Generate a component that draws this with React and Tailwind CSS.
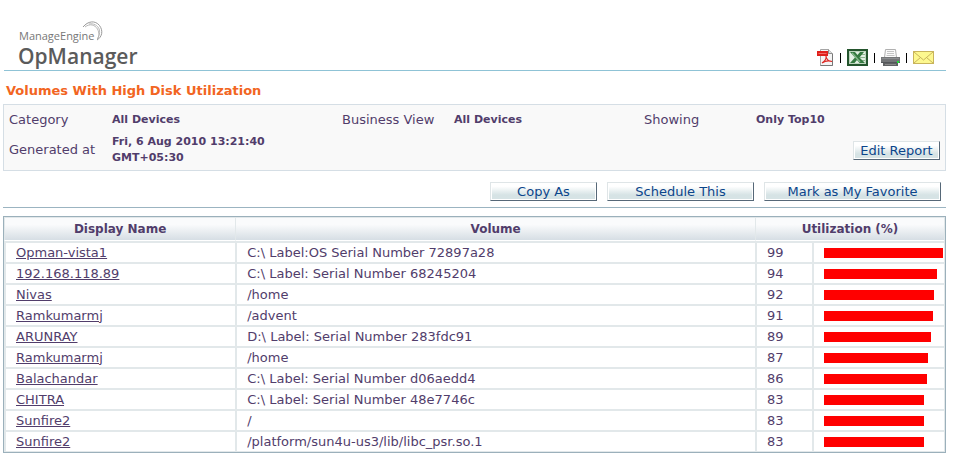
import React from 'react';

const volumes = [
  { id: 1, name: 'Opman-vista1', volume: 'C:\\ Label:OS Serial Number 72897a28', used: 99 },
  { id: 2, name: '192.168.118.89', volume: 'C:\\ Label: Serial Number 68245204', used: 94 },
  { id: 3, name: 'Nivas', volume: '/home', used: 92 },
  { id: 4, name: 'Ramkumarmj', volume: '/advent', used: 91 },
  { id: 5, name: 'ARUNRAY', volume: 'D:\\ Label: Serial Number 283fdc91', used: 89 },
  { id: 6, name: 'Ramkumarmj', volume: '/home', used: 87 },
  { id: 7, name: 'Balachandar', volume: 'C:\\ Label: Serial Number d06aedd4', used: 86 },
  { id: 8, name: 'CHITRA', volume: 'C:\\ Label: Serial Number 48e7746c', used: 83 },
  { id: 9, name: 'Sunfire2', volume: '/', used: 83 },
  { id: 10, name: 'Sunfire2', volume: '/platform/sun4u-us3/lib/libc_psr.so.1', used: 83 },
];

const PdfIcon = () => (
  <svg width="17" height="17" viewBox="0 0 17 17">
    <path d="M3.5.5h8l4 4v12h-12z" fill="#f4f4f4" stroke="#a5a5a5" />
    <path d="M11.500.5v4h4" fill="#ddd" stroke="#8f8f8f" />
    <path d="M15.500 5v11.500h-12" fill="none" stroke="#777" />
    <rect x="0" y="2" width="11" height="5" fill="#e0201b" />
    <path d="M1.500 4.500h8" stroke="#f06a66" />
    <path d="M5 14c3-2 4.500-5 4-7 0 3 2.500 5.500 6 5.500-3-1-7-.5-10 1.500z" fill="none" stroke="#dd2a25" strokeWidth="1.200" />
  </svg>
);

const ExcelIcon = () => (
  <svg width="21" height="17" viewBox="0 0 21 17">
    <rect x="1" y="1" width="19" height="15" fill="#e3efe3" stroke="#24552d" strokeWidth="2" />
    <rect x="2.500" y="2.500" width="16" height="12" fill="none" stroke="#bcd4bc" />
    <path d="M13 5.500h5M13 8.500h5M12 11.500h6" stroke="#8db58f" />
    <path d="M3 3h5l2.500 3L13 3h4l-4.500 5.500L18 14h-5.500L10 11l-2.500 3H3l5-5.500z" fill="#357a40" />
    <path d="M5 4l8 9" stroke="#86b98b" strokeWidth="1.500" />
  </svg>
);

const PrinterIcon = () => (
  <svg width="19" height="17" viewBox="0 0 19 17">
    <path d="M4.500.5h10l1 8h-12z" fill="#fafafa" stroke="#b0b0b0" />
    <path d="M6 2.500h7M6 4.500h7M5.500 6.500h8" stroke="#c4c4c4" />
    <rect x="0" y="8" width="19" height="6" fill="#747678" />
    <path d="M1 9.500h17" stroke="#8b8d8f" />
    <path d="M0 13.500h19" stroke="#55575a" />
    <rect x="2" y="14" width="15" height="3" fill="#606264" />
    <path d="M4 15.500h11" stroke="#8a8a8a" />
    <rect x="16" y="12" width="2" height="2" fill="#1fe03a" />
  </svg>
);

const MailIcon = () => (
  <svg width="21" height="13" viewBox="0 0 21 13">
    <rect x=".5" y=".5" width="20" height="12" fill="#fdf88f" stroke="#c9b45c" />
    <path d="M1 1l9.500 8L20 1M1 12l6.500-5.500M20 12l-6.500-5.500" fill="none" stroke="#c9b45c" />
  </svg>
);

const actions = [
  { label: 'Export as PDF', Icon: PdfIcon },
  { label: 'Export as Excel', Icon: ExcelIcon },
  { label: 'Print', Icon: PrinterIcon },
  { label: 'Send by mail', Icon: MailIcon },
];

const ReportButton = ({ className, children }) => (
  <button
    type="button"
    className={`h-[19px] border border-t-[#dfe5e7] border-l-[#dfe5e7] border-r-[#566878] border-b-[#566878] bg-linear-to-b from-white from-20% to-[#d6e3e5] to-70% text-[13px] leading-[17px] text-[#0b458b] shadow-[inset_0_0_0_1px_#fff] ${className}`}
  >
    {children}
  </button>
);

const Logo = () => (
  <div className="relative pl-[14px] text-[#5b5b5b] font-['Open_Sans',sans-serif]">
    <div className="pl-px text-[11px] leading-[12px] text-[#777]">ManageEngine</div>
    <div className="text-[21px] leading-[28px] font-semibold">OpManager</div>
    <svg className="absolute left-[76px] -top-[9px]" width="26" height="22" viewBox="0 0 26 22" fill="none">
      <path d="M3 6C8 0 15-1 19.500 4.500 23.500 10 22 16 17 19" stroke="#999" />
      <path d="M5 6c5-4 10-2 12.500 2 2 4 1.500 7 0 10" stroke="#a5a5a5" strokeWidth=".8" />
      <path d="M9 3c4-1 9 1 10.500 6 .5 4-.5 6-2 9" stroke="#aaa" strokeWidth=".8" />
    </svg>
  </div>
);

const App = () => {
  return (
    <div className="pl-[3px] pr-[7px] pb-[2px] text-[13px] leading-[16px] text-[#513d6b] font-['DejaVu_Sans',Verdana,sans-serif]">
      <header className="ml-px flex items-end justify-between border-b border-[#8fc3d6] pt-[30px]">
        <Logo />
        <div className="flex items-center gap-[6px] pr-[12px] pb-[4px]">
          {actions.map(({ label, Icon }, index) => (
            <React.Fragment key={label}>
              {index > 0 && <span className="h-[10px] w-px bg-black" />}
              <button type="button" aria-label={label}>
                <Icon />
              </button>
            </React.Fragment>
          ))}
        </div>
      </header>

      <h1 className="px-[3px] pt-[12px] pb-[5px] text-[13px] leading-[16px] font-bold text-[#f26522]">
        Volumes With High Disk Utilization
      </h1>

      {/* Report criteria */}
      <dl className="grid grid-cols-[103px_230fr_112px_190fr_112px_184fr] items-center gap-y-[6px] border border-[#d5dee5] bg-[#f9f9f9] pt-[7px] pr-[5px] pb-[4px] pl-[5px]">
        <dt>Category</dt>
        <dd className="text-[11px] font-bold">All Devices</dd>
        <dt>Business View</dt>
        <dd className="text-[11px] font-bold">All Devices</dd>
        <dt>Showing</dt>
        <dd className="text-[11px] font-bold">Only Top10</dd>
        <dt>Generated at</dt>
        <dd className="pr-4 text-[11px] font-bold">Fri, 6 Aug 2010 13:21:40 GMT+05:30</dd>
        <dd className="col-span-4 flex justify-end">
          <ReportButton className="w-[87px]">Edit Report</ReportButton>
        </dd>
      </dl>

      <div className="flex justify-end gap-[10px] border-b border-[#9bb4c1] pt-[11px] pr-[5px] pb-[6px]">
        <ReportButton className="w-[107px]">Copy As</ReportButton>
        <ReportButton className="w-[147px]">Schedule This</ReportButton>
        <ReportButton className="w-[177px]">Mark as My Favorite</ReportButton>
      </div>

      <table className="mt-[8px] w-full table-fixed border-separate border-spacing-0 border border-[#9bb0bb] bg-[#e2e8ea] pr-px pb-px">
        <colgroup>
          <col className="w-[24.6%]" />
          <col />
          <col className="w-[57px]" />
          <col className="w-[132px]" />
        </colgroup>
        <thead>
          <tr className="text-[12px]">
            <th className="h-[24px] border-t border-b border-l border-[#e2e8ea] border-b-white bg-linear-to-b from-[#fafbfc] from-30% to-[#d6dee4] p-0">
              Display Name
            </th>
            <th className="border-t border-b border-l border-[#e2e8ea] border-b-white bg-linear-to-b from-[#fafbfc] from-30% to-[#d6dee4] p-0">
              Volume
            </th>
            <th
              colSpan={2}
              className="border-t border-b border-l border-[#e2e8ea] border-b-white bg-linear-to-b from-[#fafbfc] from-30% to-[#d6dee4] p-0"
            >
              Utilization (%)
            </th>
          </tr>
        </thead>
        <tbody>
          {volumes.map((item) => (
            <tr key={item.id} className="bg-white">
              <td className="h-[21px] border-t-2 border-l-2 border-[#e2e8ea] p-0 pl-[10px]">
                <a href="#" className="underline">{item.name}</a>
              </td>
              <td className="border-t-2 border-l-2 border-[#e2e8ea] p-0 pl-[10px]">{item.volume}</td>
              <td className="border-t-2 border-l-2 border-[#e2e8ea] p-0 pl-[10px]">{item.used}</td>
              <td className="border-t-2 border-l-2 border-[#e2e8ea] p-0 pl-[10px]">
                <div className="h-[10px] bg-[#ff0000]" style={{ width: `${item.used}%` }} />
              </td>
            </tr>
          ))}
        </tbody>
      </table>
    </div>
  );
};

export default App;
